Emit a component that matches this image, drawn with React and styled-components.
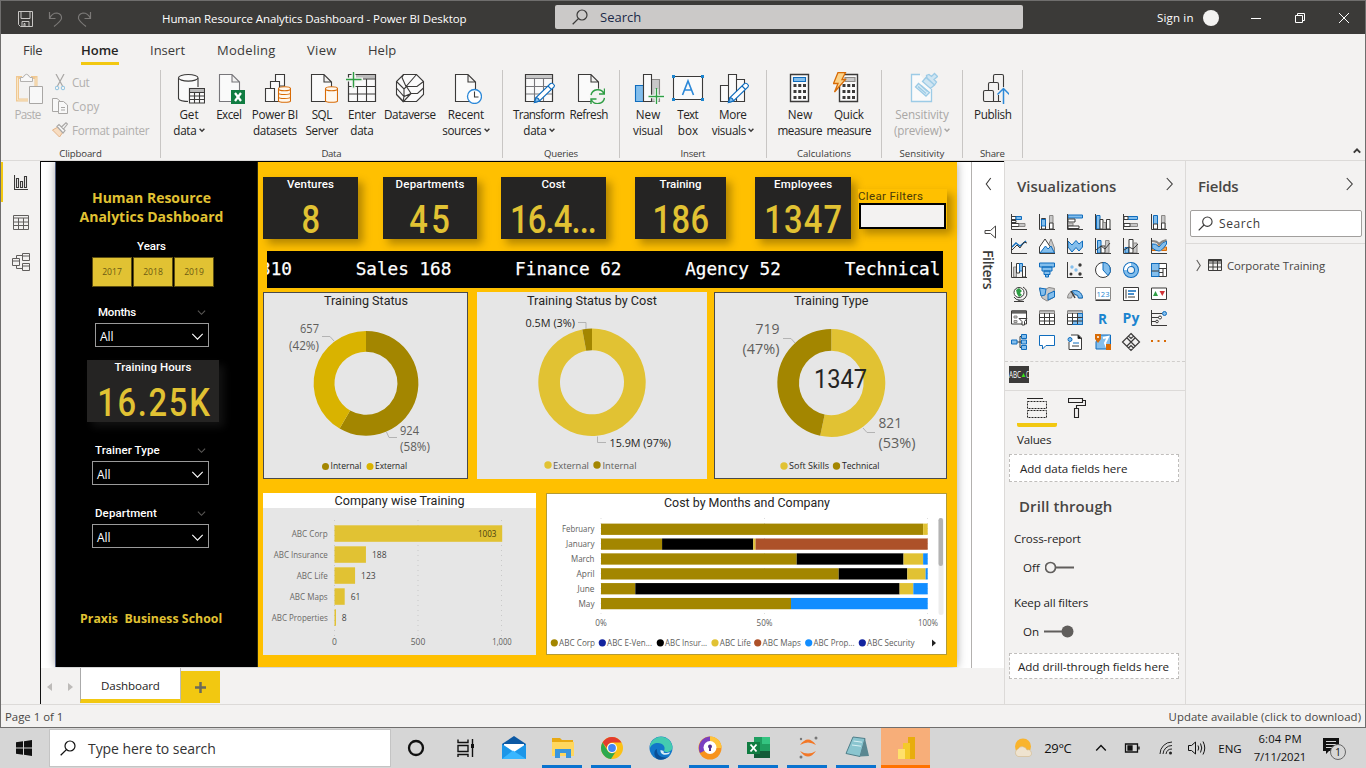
import React, { useLayoutEffect, useRef, useState } from "react";
import styled, { createGlobalStyle, css } from "styled-components";

const UI = `"Open Sans", "Noto Sans", sans-serif`;
const DIN = `Roboto, "Liberation Sans", sans-serif`;
const C = {
  ink: "#252423", dark: "#3b3a39", pane: "#f3f2f1", line: "#dcdad8", yellow: "#f2c811",
  amber: "#ffc000", gold: "#e1c233", olive: "#a38600", mustard: "#d9b300", card: "#252423",
  blue: "#118dff", sky: "#83beec", stroke: "#0f6cbd", grey: "#c8c6c4", rust: "#ad5129",
};

const Global = createGlobalStyle`
  * { box-sizing: border-box; }
  body { margin: 0; overflow: hidden; background: #d5d5d5; font-family: ${UI}; font-size: 12px; color: ${C.ink}; }
  svg { display: block; flex: none; }
`;

/* ---------- text that keeps a set advance width ---------- */
const FitSpan = styled.span`
  display: inline-block;
  white-space: pre;
`;
function Fit({ w, children }) {
  const ref = useRef(null);
  const [ls, setLs] = useState(0);
  useLayoutEffect(() => {
    const n = String(children).length;
    const natural = ref.current.offsetWidth;
    setLs((w - natural) / Math.max(1, n - 1));
  }, [w, children]);
  return <FitSpan ref={ref} style={{ letterSpacing: ls, marginRight: -ls }}>{children}</FitSpan>;
}

/* ---------- shell ---------- */
const Screen = styled.div`
  width: 1366px; height: 768px; display: flex; flex-direction: column; overflow: hidden;
`;
const Window = styled.div`
  height: 728px; display: flex; flex-direction: column; background: ${C.pane};
  border: 1px solid #6f6e6d;
`;
const TitleBar = styled.div`
  height: 33px; flex: none; background: #3b3a38; color: #fff; display: flex; align-items: center;
`;
const QuickTools = styled.div`
  width: 161px; display: flex; align-items: center; padding: 3px 0 0 16px; gap: 14px;
`;
const WindowTitle = styled.div`width: 393px; font-size: 11.5px; padding-top: 1px;`;
const TopSearch = styled.div`
  width: 468px; height: 24px; background: #cbc9c8; border-radius: 2px; color: #1b2a49;
  display: flex; align-items: center; padding-left: 17px; gap: 12px; font-size: 13px; margin-bottom: 1px;
`;
const SignIn = styled.div`
  display: flex; align-items: center; gap: 10px; font-size: 11.5px; margin-left: 134px; width: 94px;
`;
const Avatar = styled.div`width: 16px; height: 16px; border-radius: 50%; background: #f3f2f1;`;
const WindowButtons = styled.div`display: flex; gap: 34px; align-items: center;`;

const Tabs = styled.div`height: 32px; flex: none; display: flex; padding-left: 22px;`;
const Tab = styled.div`
  width: ${p => p.$w}px; margin-right: ${p => p.$gap}px; height: 31px; line-height: 33px; font-size: 13px;
  color: #3b3a39; border-bottom: 3px solid ${p => (p.$on ? C.yellow : "transparent")};
  ${p => p.$on && css`font-weight: 600; color: ${C.ink};`}
`;

const Ribbon = styled.div`
  height: 94px; flex: none; display: flex; position: relative; padding-top: 4px;
`;
const Group = styled.div`
  height: 88px; width: ${p => p.$w}px; border-right: 1px solid #c8c6c4; display: flex; flex-direction: column;
  justify-content: space-between;
`;
const GroupRow = styled.div`display: flex; padding: 2px 0 0 8px;`;
const GroupName = styled.div`font-size: 9.6px; line-height: 9px; text-align: center; color: #3b3a39;`;
const Tool = styled.div`
  width: ${p => p.$w}px; display: flex; flex-direction: column; align-items: center; font-size: 11.7px;
  line-height: 16px; white-space: nowrap; color: ${p => (p.$off ? "#a9a7a5" : C.ink)};
  svg.big { margin-bottom: 2px; }
`;
const ToolLine = styled.div`display: flex; align-items: center; gap: 2px; height: 16px;`;
const ClipBody = styled.div`display: flex; color: #b1afad;`;
const PasteTool = styled.div`
  width: 54px; display: flex; flex-direction: column; align-items: center; padding-top: 2px; font-size: 11.7px; line-height: 16px;
  svg { margin-bottom: 2px; }
`;
const ClipList = styled.div`display: flex; flex-direction: column; font-size: 11.7px;`;
const ClipItem = styled.div`display: flex; align-items: center; height: 24px; gap: ${p => p.$gap}px; margin-left: ${p => p.$ml}px;`;
const Collapse = styled.div`position: absolute; right: 4px; bottom: 5px;`;

/* ---------- middle ---------- */
const Main = styled.div`height: 544px; flex: none; display: flex; border-top: 1px solid ${C.line};`;
const Rail = styled.div`width: 40px; display: flex; flex-direction: column; border-right: 1px solid #111; padding-top: 1px;`;
const RailItem = styled.div`
  height: 40px; display: flex; align-items: center; justify-content: center;
  border-left: 2px solid ${p => (p.$on ? C.yellow : "transparent")}; padding-right: 1px;
`;
const Center = styled.div`width: 963px; display: flex; flex-direction: column;`;
const CanvasRow = styled.div`height: 507px; display: flex; background: #fff; overflow: hidden; border-top: 1px solid #000;`;
const Report = styled.div`
  margin-left: 14px; width: 902px; height: 505px; display: flex; box-shadow: 0 0 9px rgba(0,0,0,.35);
`;
const FilterPane = styled.div`
  width: 33px; margin-left: 14px; border-left: 1px solid #b3b1af; display: flex; flex-direction: column; align-items: center;
  padding-top: 16px; background: #fff; position: relative;
`;
const FilterMark = styled.svg`margin-top: 35px; margin-left: 4px;`;
const FilterName = styled.div`
  writing-mode: vertical-rl; font-size: 14px; line-height: 18px; font-weight: 600; color: #3b3a39; margin-top: 11px; letter-spacing: -.35px;
`;

/* ---------- report left column ---------- */
const Side = styled.div`width: 202px; background: #000; display: flex; flex-direction: column; border-left: 1px solid #4c5878;`;
const SideTitle = styled.div`
  margin-top: 26px; width: 191px; text-align: center; color: ${C.gold}; font-size: 14px; line-height: 19px; font-weight: 700;
`;
const YearsName = styled.div`
  width: 191px; text-align: center; color: #fff; font: 500 11.5px/14px ${DIN}; margin-top: 13px; 
`;
const Years = styled.div`display: flex; gap: 1px; margin: 4px 0 0 36px;`;
const Year = styled.div`
  width: 40px; height: 30px; background: ${C.gold}; border: 1px solid #5b4d10; color: #6b5a12; font-size: 8.6px;
  display: flex; align-items: center; justify-content: center;
`;
const Slicer = styled.div`
  margin: ${p => p.$mt}px 0 0 ${p => p.$ml}px; width: ${p => p.$w}px; display: flex; flex-direction: column; color: #fff;
`;
const SlicerHead = styled.div`
  display: flex; justify-content: space-between; align-items: center; padding: 0 3px 0 3px; height: 14px; font: 500 11.5px/14px ${DIN};
`;
const SlicerBox = styled.div`
  margin-top: 4px; height: 24px; border: 1px solid #9a9a9a; display: flex; align-items: center; justify-content: space-between;
  padding: 2px 4px 0 4px; font-size: 12px;
`;
const Hours = styled.div`
  margin: 13px 0 0 31px; width: 132px; height: 62px; background: ${C.card}; display: flex; flex-direction: column; align-items: center;
  box-shadow: 5px 5px 8px rgba(60,60,60,.3);
`;
const Praxis = styled.div`margin: 62px 0 0 24px; color: ${C.gold}; font-size: 12.3px; font-weight: 700; line-height: 18px;`;

/* ---------- report body ---------- */
const Body = styled.div`width: 700px; background: ${C.amber}; padding: 15px 0 0 5px; border-left: 1px solid #2a2a10;`;
const Kpis = styled.div`display: flex; align-items: flex-start;`;
const Kpi = styled.div`
  width: ${p => p.$w}px; margin-right: ${p => p.$gap}px; height: 62px; background: ${C.card}; display: flex; flex-direction: column;
  align-items: center; box-shadow: 5px 5px 8px rgba(70,50,0,.4);
`;
const KpiName = styled.div`color: #fff; font: 500 11.5px/14px ${DIN};`;
const KpiValue = styled.div`
  color: ${C.gold}; font: 500 38px/48px ${DIN}; padding-top: 5px; height: 48px; transform: scaleX(.86);
`;
const Clear = styled.div`
  margin-top: 12px; width: 89px; height: 40px; box-shadow: 5px 5px 8px rgba(70,50,0,.4); background: ${C.amber}; 
  font: 400 11.5px/14px ${DIN}; color: #4a3a08;
`;
const ClearBox = styled.div`width: 87px; height: 26px; margin-left: 1px; border: 2px solid #000; background: #f3f2f1;`;
const Ticker = styled.div`
  margin: 12px 0 0 4px; width: 676px; height: 37px; background: #000; color: #fff; overflow: hidden; white-space: pre; 
  font: 400 17.66px/36px "DejaVu Sans Mono", monospace; display: flex;
`;
const TickerRun = styled.span`margin-left: -7px; -webkit-text-stroke: .25px #fff;`;
const ChartRow = styled.div`display: flex; margin-top: ${p => p.$mt}px;`;
const Tile = styled.div`
  width: ${p => p.$w}px; height: ${p => p.$h}px; margin-right: ${p => p.$gap || 0}px; background: ${p => p.$bg};
  box-shadow: ${p => (p.$line ? `inset 0 0 0 1px ${p.$line}` : "none")};
`;

/* ---------- page tabs / status ---------- */
const PageTabs = styled.div`height: 36px; display: flex; align-items: flex-start; background: ${C.pane};`;
const PageNav = styled.div`width: 39px; height: 37px; display: flex; align-items: center; justify-content: space-between; padding: 0 6px 0 6px;`;
const PageTab = styled.div`
  width: 101px; height: 35px; background: #fff; border-bottom: 4px solid ${C.yellow}; border-left: 1px solid #aaa; border-right: 1px solid #bbb;
  display: flex; align-items: center; justify-content: center; font-size: 11.6px; padding-top: 4px;
`;
const AddPage = styled.div`width: 39px; height: 32px; margin-top: 3px; background: ${C.yellow}; display: flex; align-items: center; justify-content: center;`;
const Status = styled.div`
  flex: 1; border-top: 1px solid ${C.line}; display: flex; justify-content: space-between; align-items: center;
  padding: 1px 4px 0 4px; font-size: 11.4px; color: #484644;
`;

/* ---------- right panes ---------- */
const VizPane = styled.div`width: 181px; border-left: 1px solid ${C.line}; display: flex; flex-direction: column;`;
const FieldsPane = styled.div`flex: 1; border-left: 1px solid ${C.line}; display: flex; flex-direction: column;`;
const PaneHead = styled.div`
  height: 46px; display: flex; align-items: center; justify-content: space-between; padding: 3px 10px 0 12px; font-size: 15px; 
  font-weight: 600; color: #484644; flex: none;
  svg { margin-bottom: 4px; }
`;
const IconGrid = styled.div`
  display: grid; grid-template-columns: repeat(6, 28px); grid-auto-rows: 24px; padding: 3px 0 6px 0; height: 155px;
  border-bottom: 1px dashed #d0cecc; justify-items: center; align-items: center; 
`;
const Custom = styled.div`height: 29px; border-bottom: 1px solid ${C.line}; padding: 4px 0 0 4px;`;
const FormatTabs = styled.div`display: flex; padding: 7px 0 0 12px; height: 38px;`;
const FormatTab = styled.div`
  width: 40px; height: 29px; display: flex; justify-content: center; border-bottom: 4px solid ${p => (p.$on ? C.yellow : "transparent")};
  border-radius: 2px;
`;
const WellName = styled.div`font-size: 11.6px; line-height: 16px; padding-left: ${p => p.$pl}px; margin-top: ${p => p.$mt}px;`;
const Well = styled.div`
  margin: ${p => p.$mt}px 0 0 4px; width: 170px; height: ${p => p.$h}px; background: #fff; border: 1px dashed #c0bebc; 
  padding-left: ${p => p.$pl}px; display: flex; align-items: center; font-size: 11.6px;
`;
const Drill = styled.div`font-size: 15px; font-weight: 600; color: #484644; line-height: 22px; padding-left: 14px; margin-top: 13px;`;
const Toggle = styled.div`display: flex; align-items: center; padding-left: 18px; gap: 5px; height: 16px; margin-top: ${p => p.$mt}px; font-size: 11.6px;`;
const FieldSearch = styled.div`
  margin: 3px 3px 0 4px; height: 27px; border: 1px solid #a19f9d; border-radius: 2px; background: #fff; display: flex; align-items: center;
  padding-left: 7px; gap: 6px; font-size: 12px; color: #3b3a39;
`;
const FieldTree = styled.div`margin-top: 6px; border-top: 1px solid ${C.line}; padding: 12px 0 0 9px;`;
const FieldItem = styled.div`display: flex; align-items: center; height: 18px; font-size: 11.4px; color: #484644;
  svg:nth-child(2) { margin: 0 5px 0 6px; }
`;

/* ---------- taskbar ---------- */
const Taskbar = styled.div`height: 40px; flex: none; background: #d6d6d6; display: flex; color: #111;`;
const StartCell = styled.div`width: 49px; display: flex; align-items: center; justify-content: center; padding-right: 1px;`;
const TaskSearch = styled.div`
  width: 342px; height: 38px; margin-top: 1px; background: #fff; border: 1px solid #c4c4c4; display: flex; align-items: center; padding-left: 10px; gap: 12px; font-size: 14px; color: #333;
`;
const TaskCell = styled.div`
  width: 49px; height: 40px; display: flex; align-items: center; justify-content: center; position: relative;
  background: ${p => (p.$active ? "#f7ae79" : "transparent")};
  &::after { content: ""; position: absolute; left: ${p => (p.$active ? 0 : 4)}px; right: ${p => (p.$active ? 0 : 5)}px; bottom: 0; height: 3px;
    background: ${p => (p.$active ? "#ff7200" : p.$open ? "#0a73cf" : "transparent")}; }
`;
const Tray = styled.div`flex: 1; display: flex; align-items: center; padding-left: 81px;`;
const TrayItem = styled.div`
  width: ${p => p.$w}px; margin-left: ${p => p.$ml || 0}px; display: flex; align-items: center; justify-content: center; font-size: ${p => p.$fs || 12}px;
`;
const Clock = styled.div`width: 66px; font-size: 11.3px; line-height: 18px; text-align: center;`;

/* ---------- small glyphs ---------- */
const Chev = ({ d = "down", s = 8, c = C.dark, t = 1.1, w, h }) => {
  const path = { down: "M1 3 5 7 9 3", up: "M1 7 5 3 9 7", left: "M7.5 0 2.5 5 7.5 10", right: "M2.5 0 7.5 5 2.5 10" }[d];
  return <svg width={w || s} height={h || s} viewBox="0 0 10 10" preserveAspectRatio="none" overflow="visible"><path d={path} fill="none" stroke={c} strokeWidth={t} vectorEffect="non-scaling-stroke" /></svg>;
};
const Mag = ({ s = 16, c = C.dark }) => (
  <svg width={s} height={s} viewBox="0 0 16 16"><circle cx="10" cy="6" r="5" fill="none" stroke={c} strokeWidth="1.2" /><path d="M6.4 9.6 .7 15.3" stroke={c} strokeWidth="1.3" /></svg>
);

/* ---------- ribbon icons, 32 x 32 ---------- */
const K = C.dark;
const Big = ({ children, w = 32 }) => <svg className="big" width={w} height="32" viewBox={`0 0 ${w} 32`} fill="#fafafa" stroke={K} strokeWidth="1.1">{children}</svg>;
const Doc = ({ x = 5.5, c = K }) => <path stroke={c} d={`M${x} 2.5H${x + 12.5}L${x + 20} 10V29.5H${x}ZM${x + 12.5} 2.5V10H${x + 20}`} />;
const Cyl = () => (
  <g stroke="#d86b06" fill="#fff8ee"><path d="M19.5 17V29C19.5 30.7 31.5 30.7 31.5 29V17" /><ellipse cx="25.5" cy="16.7" rx="6" ry="2" /></g>
);
const Pencil = () => (
  <g><path d="M11.5 30.500 13 25.500 27.500 11.500Q30 10.500 31.500 13.500L31 15 16.500 29Z" fill="#fff" stroke={C.stroke} /><path d="M11.500 30.500 13 25.500Q16 26 16.500 29Z" fill={C.sky} stroke={C.stroke} /><path d="M25 14 28.500 17.500" stroke={C.stroke} /></g>
);
const I = {
  get: <Big><path d="M5.500 6V26.500C6 28.500 10 29.500 17 29.500H25V6" /><ellipse cx="15.250" cy="5.800" rx="9.750" ry="3.300" /><path d="M15 15H32V32H15Z" fill="#f3f2f1" stroke="none" /><path d="M17 17H31V31H17Z" stroke="none" /><path d="M17 17H31V20H17Z" fill="#bbb" stroke="none" /><path d="M16.500 16.500H31.500V31H16.500ZM16.500 20.500H31.500M16.500 24H31.500M16.500 27.500H31.500M21.500 20V31M26.500 20V31" fill="none" /></Big>,
  excel: <Big><Doc x={6.5} c="#77767a" /><path d="M18 18H32V32H18Z" fill="#107c41" stroke="none" /><path d="M22 21 28 29M28 21 22 29" stroke="#fff" strokeWidth="2.200" /></Big>,
  pbi: <Big><path d="M16.500 9V2.500H25.500V14H16.500" /><path d="M11.500 16V9.500H20.500V29.500H15.500" /><path d="M6.500 16.500H15.500V29.500H6.500Z" /><Cyl /><path d="M19.500 21C19.500 23 31.500 23 31.500 21M19.500 25C19.500 27 31.500 27 31.500 25" stroke="#d86b06" fill="none" /></Big>,
  sql: <Big><Doc x={5.500} /><Cyl /></Big>,
  enter: <Big><path d="M2.500 2.500H29.500V29.500H2.500Z" /><path d="M10 3H29V6.500H10Z" fill="#bbb" stroke="none" /><path d="M2.500 2.500H29.500V29.500H2.500ZM2.500 14.500H29.500M2.500 22H29.500M11.500 14V29M20.500 7V29M10 7H29" fill="none" /><path d="M7.500 0V17M0 7.500H17" stroke="#f3f2f1" strokeWidth="4" /><path d="M7.500 0V15.500M0 7.500H15.500" stroke="#2f9e44" strokeWidth="1.400" /></Big>,
  dv: <Big><path d="M9.500 2.500H22.500L29.500 9.500V22.500L22.500 29.500H9.500L2.500 22.500V9.500Z" /><path d="M9.500 2.500 8 5.500 12 14.500 22.500 2.500M2.500 9.500 10 17 12.500 14.500H23L29.500 9.500M2.500 16 10 24.500 17 21.500 12.500 14.500M17 21.500H23.500L29.500 16M2.500 22.500 9 29.500 10 24.500M10 17V24.500M17 21.500 10 29" fill="none" /></Big>,
  recent: <Big><Doc x={5.500} /><circle cx="24.500" cy="24.500" r="7" stroke="#2b88d8" fill="#fff" strokeWidth="1.300" /><path d="M24.500 19.500V25H28.500" fill="none" /></Big>,
  transform: <Big><path d="M2.500 2.500H29.500V29.500H2.500Z" /><path d="M3 3H29V6H3Z" fill="#c8c8c8" stroke="none" /><path d="M2.500 6.500H29.500M2.500 14.500H29.500M2.500 22H29.500M11.500 7V29M20.500 7V29" stroke="#77767a" /><path d="M2.500 2.500H29.500V29.500H2.500Z" fill="none" /><Pencil /></Big>,
  refresh: <Big><Doc x={5.500} /><circle cx="24.500" cy="24.500" r="8" fill="#f3f2f1" stroke="none" /><path d="M18 23A7 7 0 0 1 31 21.500M31.500 16.500V22H26M31.500 26A7 7 0 0 1 18.500 28M18 32V27H23.500" fill="none" stroke="#2f9e44" strokeWidth="1.400" /></Big>,
  visual: <Big><path d="M19.500 7.500H27.500V29.500H19.500Z" fill="#c8c8c8" stroke="#8a8886" /><path d="M3.500 13.500H11.500V29.500H3.500Z" fill={C.sky} stroke={C.stroke} /><path d="M11.500 2.500H19.500V29.500H11.500Z" /><path d="M24.500 17V32M17 24.500H32" stroke="#fff" strokeWidth="3.500" /><path d="M24.500 16V32M16.500 24.500H32" stroke="#2f9e44" strokeWidth="1.400" /></Big>,
  text: <Big><path d="M1.500 4.500H30.500V27.500H1.500Z" /><path d="M10.500 23 16 9 21.500 23M12.300 18H19.700" fill="none" stroke="#2b88d8" strokeWidth="1.600" /><path d="M0 3H3V6H0ZM29 3H32V6H29ZM0 26H3V29H0ZM29 26H32V29H29Z" fill="#1b84cf" stroke="none" /></Big>,
  more: <Big><path d="M3.500 13.500H11.500V29.500H3.500ZM11.500 2.500H19.500V29.500H11.500ZM19.500 7.500H27.500V29.500H19.500Z" /><Pencil /></Big>,
  calc: <Big><path d="M6.500 2.500H24.500V29.500H6.500Z" strokeWidth="1.400" /><path d="M9.500 5.500H21.500V9.500H9.500Z" fill={C.sky} stroke={C.stroke} /><path d="M9.500 13.500H22M9.500 19.500H22M9.500 25.500H22" strokeWidth="3" strokeDasharray="3 1.750" /></Big>,
  quick: <Big><path d="M6.500 2.500H24.500V29.500H6.500Z" strokeWidth="1.400" /><path d="M12 5.500H22V9.500H12Z" fill="#c8c8c8" stroke="#8a8886" /><path d="M9.500 13.500H22M9.500 19.500H22M9.500 25.500H22" strokeWidth="3" strokeDasharray="3 1.750" /><path d="M5 .5H12.500L9 7.500H12.500L1.500 20 5 11.500H.5Z" fill="#fbd38a" stroke="#d86b06" strokeWidth="1.300" /></Big>,
  sens: <Big><g stroke="#9ccbe6" strokeWidth="1.300"><path d="M14 2.500H5.500V29.500H25.500V17" /><path d="M9.500 15 12.500 11.500 23.500 20.500 20 24Z" fill="#d8ebf5" /><path d="M12 14.500 20 21.500M15 13.500 21.500 19.500" fill="none" /><path d="M16.500 9.500 20 5.500 28.500 13 24.500 16.500ZM21 6 20.500 3.500 23 2.500 25.500 4.500 28.500 1.500 31.500 4.500 28 7.500 30.500 10 28.500 13Z" fill="#cfe5f2" /></g></Big>,
  publish: <Big><path d="M16.500 10V4Q16.500 2.500 18 2.500H25Q26.500 2.500 26.500 4V15M11.500 18V12Q11.500 10.500 13 10.500H20Q21.500 10.500 21.500 12V18M6.500 20Q6.500 18.500 8 18.500H15Q16.500 18.500 16.500 20V29.500H8Q6.500 29.500 6.500 28ZM16.500 29.500H24M21.500 23V29" fill="none" /><path d="M26.500 32V17M20.500 22.500 26.500 16.500 32.500 22.500" stroke="#2b88d8" fill="none" strokeWidth="1.500" /></Big>,
};

const ribbon = [
  { name: "Data", w: 342, nw: 20, tools: [["get", 40, "Get", 19, "data", 23, 1], ["excel", 40, "Excel", 26], ["pbi", 52, "Power BI", 46, "datasets", 44], ["sql", 42, "SQL", 21, "Server", 33], ["enter", 38, "Enter", 28, "data", 23], ["dv", 58, "Dataverse", 52], ["recent", 54, "Recent", 36, "sources", 39, 1]] },
  { name: "Queries", w: 117, nw: 34, tools: [["transform", 56, "Transform", 52, "data", 23, 1], ["refresh", 44, "Refresh", 39]] },
  { name: "Insert", w: 147, nw: 25, tools: [["visual", 40, "New", 24, "visual", 30], ["text", 40, "Text", 21, "box", 20], ["more", 50, "More", 28, "visuals", 35, 1]] },
  { name: "Calculations", w: 115, nw: 54, tools: [["calc", 50, "New", 24, "measure", 45], ["quick", 48, "Quick", 30, "measure", 45]] },
  { name: "Sensitivity", w: 81, nw: 45, tools: [["sens", 64, "Sensitivity", 54, "(preview)", 48, 1]] },
  { name: "Share", w: 60, nw: 25, tools: [["publish", 44, "Publish", 38]] },
];

function RibbonBar() {
  return (
    <Ribbon>
      <Group $w={160}>
        <ClipBody>
          <PasteTool>
            <svg width="32" height="32" viewBox="0 0 32 32" fill="none"><path d="M10 5.500H5.500V28H16M24 14V5.500H19" stroke="#f0c891" strokeWidth="3" /><path d="M5.500 5.500V28H16M24 14V5.500" stroke="#f8e6c8" /><path d="M8.500 9.500V5.500H11Q14.500 -1 18 5.500H20.500V9.500Z" fill="#f8f8f8" stroke="#b3b1af" /><path d="M17.500 14.500H30.500V31.500H17.500Z" fill="#f8f8f8" stroke="#a9a7a5" /></svg>
            <Fit w={27}>Paste</Fit>
          </PasteTool>
          <ClipList>
            <ClipItem $gap={7} $ml={0}><svg width="10" height="17" viewBox="0 0 10 17" fill="none"><path d="M1 0 7.500 12M9 0 2.500 12" stroke="#a9a7a5" strokeWidth="1.200" /><circle cx="2" cy="14" r="1.800" stroke="#8fc3e0" /><circle cx="8" cy="14" r="1.800" stroke="#8fc3e0" /></svg><Fit w={18}>Cut</Fit></ClipItem>
            <ClipItem $gap={4} $ml={-3}><svg width="16" height="16" viewBox="0 0 16 16" fill="#f8f8f8" stroke="#a9a7a5"><path d="M6 13.500H.5V.5H5L8 3M6.500 3.500H11.500L15.500 7V15.500H6.500ZM9 9.500H13M9 12H13" /></svg><Fit w={27}>Copy</Fit></ClipItem>
            <ClipItem $gap={4} $ml={-3}><svg width="16" height="16" viewBox="0 0 16 16" fill="none"><path d="M.5 8 6 5 11 10 7.500 15Z" fill="#f7dcc0" stroke="#e2b287" /><path d="M5 4.500 7 2.500 13 8.500 11 11ZM9.500 5 14 .8 15.500 2 11.500 7" fill="#f8f8f8" stroke="#a9a7a5" strokeWidth="1.200" /></svg><Fit w={78}>Format painter</Fit></ClipItem>
          </ClipList>
        </ClipBody>
        <GroupName><Fit w={43}>Clipboard</Fit></GroupName>
      </Group>
      {ribbon.map(g => (
        <Group key={g.name} $w={g.w}>
          <GroupRow>
            {g.tools.map(([id, w, a, aw, b, bw, menu]) => (
              <Tool key={id} $w={w} $off={id === "sens"}>
                {I[id]}
                <ToolLine><Fit w={aw}>{a}</Fit></ToolLine>
                {b && <ToolLine><Fit w={bw}>{b}</Fit>{menu && <Chev s={6} t={1.5} c={id === "sens" ? "#a9a7a5" : K} />}</ToolLine>}
              </Tool>
            ))}
          </GroupRow>
          <GroupName><Fit w={g.nw}>{g.name}</Fit></GroupName>
        </Group>
      ))}
      <Collapse><Chev d="up" s={8} t={2} /></Collapse>
    </Ribbon>
  );
}

/* ---------- charts ---------- */
const T = ({ x, y, s = 9, w, c = "#605e5c", a = "start", f = UI, b, children }) => (
  <text x={x} y={y} fontSize={s} fill={c} textAnchor={a} fontFamily={f} fontWeight={b || 400} textLength={w} lengthAdjust="spacingAndGlyphs">{children}</text>
);
const arc = (cx, cy, R, r, a0, a1) => {
  const p = (q, a) => `${(cx + q * Math.sin(a * 2 * Math.PI)).toFixed(2)} ${(cy - q * Math.cos(a * 2 * Math.PI)).toFixed(2)}`;
  const big = a1 - a0 > 0.5 ? 1 : 0;
  return `M${p(R, a0)}A${R} ${R} 0 ${big} 1 ${p(R, a1)}L${p(r, a1)}A${r} ${r} 0 ${big} 0 ${p(r, a0)}Z`;
};
const Donut = ({ cx, cy, R, r, split, c1, c2 }) => (
  <g><path d={arc(cx, cy, R, r, 0, split)} fill={c1} /><path d={arc(cx, cy, R, r, split, 1)} fill={c2} /></g>
);
const Lead = ({ d }) => <path d={d} fill="none" stroke="#b3b3b3" />;

const StatusChart = () => (
  <svg width="205" height="187">
    <T x={61} y={13} s={12} w={84} c={C.ink} f={DIN}>Training Status</T>
    <Donut cx={103} cy={91.3} R={52.4} r={31.5} split={0.584} c1={C.olive} c2={C.mustard} />
    <T x={56} y={40.800} s={12} w={19} a="end">657</T><T x={56} y={58} s={12} w={30} a="end">(42%)</T>
    <Lead d="M59 44.500H67L71 49" />
    <T x={137} y={143} s={12} w={19}>924</T><T x={137} y={159} s={12} w={30}>(58%)</T>
    <Lead d="M123.500 140 126 145.500H134" />
    <circle cx="62.500" cy="174.500" r="3.500" fill={C.olive} /><T x={67.500} y={177.300} w={31} c={C.ink}>Internal</T>
    <circle cx="107" cy="174.500" r="3.500" fill={C.mustard} /><T x={112} y={177.300} w={32} c={C.ink}>External</T>
  </svg>
);
const CostChart = () => (
  <svg width="230" height="187">
    <T x={50} y={12.500} s={12} w={130} c={C.ink} f={DIN}>Training Status by Cost</T>
    <Donut cx={115} cy={90.300} R={53.700} r={32} split={0.971} c1={C.gold} c2={C.olive} />
    <T x={48.500} y={34.500} s={10} w={49.500} c={C.ink}>0.5M (3%)</T><Lead d="M101 30.500H109V37" />
    <T x={132.500} y={155} s={10} w={61.500} c={C.ink}>15.9M (97%)</T><Lead d="M120.500 144.500V150.500H129" />
    <circle cx="71" cy="173" r="3.700" fill={C.gold} /><T x={76} y={177.300} w={36}>External</T>
    <circle cx="120" cy="173" r="3.700" fill={C.olive} /><T x={125.500} y={177.300} w={34}>Internal</T>
  </svg>
);
const TypeChart = () => (
  <svg width="233" height="187">
    <T x={80} y={13} s={12} w={74.500} c={C.ink} f={DIN}>Training Type</T>
    <Donut cx={117.300} cy={91} R={54} r={32.300} split={0.533} c1={C.gold} c2={C.olive} />
    <T x={65.500} y={42} s={14} w={24} a="end">719</T><T x={65.500} y={61.500} s={14} w={37} a="end">(47%)</T>
    <Lead d="M69 46.500H77L81 51" />
    <T x={164.500} y={136} s={14} w={23.500}>821</T><T x={164.500} y={156} s={14} w={37}>(53%)</T>
    <Lead d="M149 136 153 140.500H161" />
    <T x={100} y={96} s={25} w={53} c={C.ink} f={DIN}>1347</T>
    <circle cx="70" cy="174" r="3.700" fill={C.gold} /><T x={75} y={177.300} w={40} c={C.ink}>Soft Skills</T>
    <circle cx="122.500" cy="174" r="3.700" fill={C.olive} /><T x={128} y={177.300} w={37.500} c={C.ink}>Technical</T>
  </svg>
);
const companies = [["ABC Corp", 1003, 36], ["ABC Insurance", 188, 54], ["ABC Life", 123, 31], ["ABC Maps", 61, 38], ["ABC Properties", 8, 56]];
const CompanyChart = () => (
  <svg width="273" height="162">
    <rect width="273" height="15" fill="#fff" />
    <T x={71.500} y={12.300} s={12.300} w={130} c={C.ink} f={DIN}>Company wise Training</T>
    {[71.500, 155, 238.500].map(x => <path key={x} d={`M${x} 27V143`} stroke="#c8c8c8" strokeDasharray="1 4" />)}
    {companies.map(([n, v, w], i) => (
      <g key={n}>
        <rect x="71.500" y={32.300 + 21 * i} width={Math.max(1.500, v * 0.1672)} height="16.500" fill={C.gold} />
        <T x={64.700} y={43.500 + 21 * i} s={8.500} w={w} a="end" c="#6b6967">{n}</T>
        {i === 0 ? <T x={233.500} y={44.300} s={8.500} w={18.500} a="end" c="#4a4010">1003</T>
          : <T x={77.500 + v * 0.1672} y={44.300 + 21 * i} s={8.500} c="#444">{v}</T>}
      </g>
    ))}
    <T x={71.500} y={152} s={8.500} a="middle">0</T><T x={155} y={152} s={8.500} a="middle">500</T><T x={239} y={152} s={8.500} w={19.500} a="middle">1,000</T>
  </svg>
);
const palette = [C.olive, "#000", C.gold, C.rust, C.blue];
const months = [
  ["February", 32.500, [0.986, 0, 0.014, 0, 0]], ["January", 28.500, [0.187, 0.279, 0.007, 0.527, 0]],
  ["March", 23.500, [0.599, 0.327, 0.06, 0, 0.014]], ["April", 18, [0.7276, 0.21, 0.056, 0, 0.0064]],
  ["June", 17, [0.105, 0.809, 0.042, 0, 0.044]], ["May", 16, [0.5816, 0, 0, 0, 0.4184]],
];
const legend = [["ABC Corp", 8.300, 36, C.olive], ["ABC E-Ven...", 56.300, 45, "#12239e"], ["ABC Insur...", 114.300, 42, "#000"], ["ABC Life", 169, 31, C.gold], ["ABC Maps", 211.700, 38.500, C.rust], ["ABC Prop...", 262.700, 41, C.blue], ["ABC Security", 316.300, 47.500, "#12239e"]];
const MonthChart = () => (
  <svg width="401" height="162">
    <T x={118} y={13.500} s={12.300} w={166} c={C.ink} f={DIN}>Cost by Months and Company</T>
    {[55, 218.500, 381.500].map(x => <path key={x} d={`M${x} 25V122`} stroke="#ddd" strokeDasharray="1 4" />)}
    {months.map(([n, w, parts], i) => {
      let x = 55;
      return (
        <g key={n}>
          <T x={48.500} y={39.300 + 14.870 * i} s={8.500} w={w} a="end">{n}</T>
          {parts.map((p, k) => { const r = <rect key={k} x={x} y={30.600 + 14.870 * i} width={p * 326.700} height="11.300" fill={palette[k]} />; x += p * 326.700; return r; })}
        </g>
      );
    })}
    <T x={55} y={133.300} s={8.500} w={11.500} a="middle">0%</T><T x={218.500} y={133.300} s={8.500} w={16} a="middle">50%</T><T x={382} y={133.300} s={8.500} w={20} a="middle">100%</T>
    {legend.map(([n, x, w, c]) => <g key={n}><circle cx={x} cy="149.800" r="3.600" fill={c} /><T x={x + 4.800} y={153} s={8.500} w={w}>{n}</T></g>)}
    <path d="M386 146.500V153.500L390 150Z" fill="#222" />
    <rect x="392.500" y="25" width="5" height="97" rx="2.500" fill="#ededed" /><rect x="392.500" y="25" width="4.500" height="48" rx="2.200" fill="#b3b3b3" />
  </svg>
);

/* ---------- visualization gallery, 16 x 16 ---------- */
const B = { fill: C.sky, stroke: C.stroke }, G = { fill: "#c8c8c8", stroke: "#8a8886" }, W = { fill: "#fff", stroke: K };
const gallery = [
  <g><path d="M1 2.500H5V5.500H1" {...W} /><path d="M5 2.500H10.500V5.500H5Z" {...B} /><path d="M1 6.500H5V8.500H1" {...W} /><path d="M1 9.500H8V12.500H1" {...W} /><path d="M8 9.500H14V12.500H8Z" {...G} /><path d="M.5 0V15.500H16" fill="none" /></g>,
  <g><path d="M2.500 9V15H6.500V4.500H2.500Z" {...W} /><path d="M2.500 5.500H6.500V12H2.500Z" {...B} /><path d="M10.500 1.500H14V15H10.500Z" {...G} /><path d="M10.500 9H14V15H10.500Z" {...W} /><path d="M.5 0V15.500H16" fill="none" /></g>,
  <g><path d="M1 1H15.500V4H1Z" {...B} /><path d="M1 5H8V8H1Z" {...W} /><path d="M1 9H6V12H1Z" {...G} /><path d="M1 12H12V14.500H1Z" {...W} /><path d="M.5 0V15.500H16" fill="none" /></g>,
  <g><path d="M1.500 1.500H5V15H1.500Z" {...B} /><path d="M5 5.500H8V15H5Z" {...W} /><path d="M8 8.500H11V15H8Z" {...G} /><path d="M11.500 5.500H15V15H11.500Z" {...W} /><path d="M.5 0V15.500H16" fill="none" /></g>,
  <g><path d="M1 2.500H14.500V5.500H1Z" {...B} /><path d="M1 2.500H5V5.500H1Z" {...W} /><path d="M1 9.500H14.500V12.500H1Z" {...G} /><path d="M1 9.500H7V12.500H1Z" {...W} /><path d="M.5 0V15.500H16" fill="none" /></g>,
  <g><path d="M2.500 1.500H6.500V15H2.500Z" {...B} /><path d="M2.500 10H6.500V15H2.500Z" {...W} /><path d="M10.500 1.500H14V15H10.500Z" {...G} /><path d="M10.500 9H14V15H10.500Z" {...W} /><path d="M.5 0V15.500H16" fill="none" /></g>,
  <g fill="none"><path d="M1 9 5 5 9 8 15 3" stroke={C.stroke} strokeWidth="1.400" /><path d="M1 12 6 7 9 10 13 4 16 5" /><path d="M.5 0V15.500H16" /></g>,
  <g><path d="M6 15 12 1 15.500 10V15Z" {...G} /><path d="M.5 9 6 1 12 10V15H.5Z" {...W} /><path d="M1 15 6.500 8 9 11 12 8 15.500 15Z" {...B} /><path d="M.5 15.500H16" /></g>,
  <g><path d="M1 3 5 7 9 2.500 12 6 15.500 3V9L12 13 9 9.500 5 14 1 9Z" {...B} /><path d="M.5 0V15.500H16" fill="none" /></g>,
  <g><path d="M2.500 2.500H6V15H2.500Z" {...B} /><path d="M6 8H10V15H6Z" {...W} /><path d="M10.500 2.500H14V15H10.500Z" {...G} /><path d="M1 12 6 8 10 11 15 5M.5 0V15.500H16" fill="none" /></g>,
  <g><path d="M2 9.500H5.500V15H2Z" {...B} /><path d="M6 1.500H10V15H6Z" {...W} /><path d="M10.500 5H14V15H10.500Z" {...G} /><path d="M1 12 6 9 10 11 15 6M.5 0V15.500H16" fill="none" /></g>,
  <g><path d="M1 9H4L8 6 12 9H15.500V12.500H11L8 10 5 12.500H1Z" fill="#f7a14b" stroke="#d86b06" /><path d="M1 6Q5 5 8 9 11 4 15.500 3V6Q11 13 8 13 5 13 1 10Z" {...B} /><path d="M1 3Q6 3 8 6 11 3 15.500 2" stroke="#8a8886" strokeWidth="2" fill="none" /><path d="M.5 0V15.500H16" fill="none" /></g>,
  <g><path d="M2.500 5H5.500V15H2.500Z" {...G} /><path d="M5.500 1.500H8.500V11H5.500Z" {...W} /><path d="M8.500 1.500H11.500V9H8.500Z" {...B} /><path d="M11.500 4.500H14.500V15H11.500Z" {...W} /><path d="M.5 0V15.500H16" fill="none" /></g>,
  <g {...B}><path d="M.5 1H15.500V5H.5ZM3 5H13V9H3ZM5 9H11V12.500H5ZM6.500 12.500H9.500V15H6.500Z" /></g>,
  <g stroke="none"><path d="M0 0H1V15H16V16H0Z" fill={K} /><circle cx="5" cy="5" r="1.700" fill={C.sky} /><circle cx="13" cy="3" r="1.700" fill={K} /><circle cx="9" cy="8" r="1.700" fill={C.sky} /><circle cx="4" cy="12" r="1.500" fill={K} /><circle cx="13" cy="12" r="1.700" fill={K} /></g>,
  <g><circle cx="8" cy="8" r="7.500" {...W} /><path d="M8 .5A7.500 7.500 0 0 1 13 13.500L8 8Z" {...B} /></g>,
  <g><circle cx="8" cy="8" r="5.500" fill="none" stroke={C.stroke} strokeWidth="5" /><circle cx="8" cy="8" r="5.500" fill="none" stroke={C.sky} strokeWidth="3" /><path d="M8 2.500A5.500 5.500 0 0 0 2.500 8" fill="none" stroke="#fff" strokeWidth="3" /></g>,
  <g><path d="M.5 1.500H15.500V14.500H.5Z" {...W} /><path d="M.5 1.500H8V14.500H.5Z" {...B} /><path d="M8 6.500H15.500M.5 9H8M12 6.500V14.500M8 10.500H12" /></g>,
  <g><circle cx="8" cy="6.500" r="5" fill="#fff" /><path d="M5 4 8 2 11 5 9 7 11 9 8 11 6 8Z" fill="#2f9e44" stroke="none" /><path d="M12 1A7 7 0 1 1 3 11M8 13.500V15.500M3 15.500H13" fill="none" /></g>,
  <g><path d="M.5 2 6 3.500 10 1.500 15.500 2.500 14.500 8 15.500 11 8 15 3 12Z" {...G} /><path d="M.5 2 7 3 6 9 2 10ZM9 8 15.500 5V11L9 14Z" {...B} /></g>,
  <g><path d="M.5 12A7.500 7.500 0 0 1 15.500 12H11.500A3.500 3.500 0 0 0 4.500 12Z" {...G} /><path d="M5 5.200A7.500 7.500 0 0 1 15.500 12H11.500A3.500 3.500 0 0 0 8 8.500Z" {...B} /><path d="M4 5 8 12" strokeWidth="1.500" /></g>,
  <g><path d="M.5 1.500H15.500V13.500H.5Z" fill="#fff" stroke="#8a8886" /><path d="M.5 14.500H15.500" /><text x="8" y="11" fontSize="7.500" textAnchor="middle" fill="#1b84cf" stroke="none" fontFamily={UI}>123</text></g>,
  <g><path d="M.5 1.500H15.500V14.500H.5Z" {...W} /><path d="M3 3.500V12.500" /><path d="M5 5H13M5 8H11" stroke={C.stroke} strokeWidth="1.500" /><path d="M5 11H12" /></g>,
  <g><path d="M.5 2H15.500V13.500H.5Z" {...W} /><path d="M2 10 4.500 5 7 10Z" fill="#2f9e44" stroke="none" /><path d="M8.500 5H14L11.300 10Z" fill="#d13438" stroke="none" /></g>,
  <g><path d="M.5 1H15.500V14H.5Z" {...W} /><path d="M.5 1H15.500V3H.5Z" fill="#8a8886" /><path d="M3 6H6V8H3ZM3 10.500H6V12.500H3Z" {...G} /><path d="M8 8.500H16L13.500 11.500V15H11V11.500Z" {...W} /></g>,
  <g><path d="M.5 1H15.500V14.500H.5Z" {...W} /><path d="M.5 1H15.500V3.500H.5Z" {...G} /><path d="M.5 7.500H15.500M.5 11H15.500M5.500 3V14M10.500 3V14" /></g>,
  <g><path d="M.5 1H15.500V14.500H.5Z" {...W} /><path d="M.5 1H15.500V3.500H.5Z" {...G} /><path d="M10.500 3.500H15.500V14.500H5.500V11H10.500Z" {...B} /><path d="M.5 7.500H15.500M.5 11H15.500M5.500 3V14M10.500 3V14" /></g>,
  <text x="7.500" y="13.500" fontSize="15" fontWeight="700" textAnchor="middle" fill="#1b84cf" stroke="none" fontFamily={UI} textLength="9" lengthAdjust="spacingAndGlyphs">R</text>,
  <text x="8" y="12.500" fontSize="14" fontWeight="700" textAnchor="middle" fill="#1b84cf" stroke="none" fontFamily={UI} textLength="17">Py</text>,
  <g><path d="M.5 0V15.500H16M1 3.500H11M1 7.500H8M1 11.500H5" fill="none" /><circle cx="13.500" cy="3.500" r="2" {...B} /><circle cx="9" cy="7.500" r="1.500" {...W} /><circle cx="6" cy="11.500" r="1.300" {...W} /></g>,
  <g><path d="M6 8H9M9 2.500V13.500H11M9 2.500H11M9 8H11" fill="none" /><path d="M.5 6H6V10H.5ZM10.500 .5H15.500V4.500H10.500ZM10.500 6H15.500V10H10.500ZM10.500 11.500H15.500V15.500H10.500Z" {...B} /></g>,
  <path d="M.5 1.500H15.500V11.500H7L3.500 15V11.500H.5Z" fill="#fff" stroke={C.stroke} />,
  <g><path d="M4 1H11.500L14.500 4V15.500H2V8" {...W} /><path d="M11 1V4.500H14.500M5 12H12" /><path d="M6 9H12" stroke={C.stroke} /><circle cx="3" cy="5.500" r="2" {...B} /></g>,
  <g><path d="M4 1H15.500V15H1V8Z" {...B} /><path d="M8 4 13 3 10 9 12 14" stroke="#fff" strokeWidth="2" fill="none" /><path d="M0 0H6V5L3 9 0 5ZM11 10H16V16H11Z" fill="#d86b06" stroke="none" /><circle cx="3" cy="3" r="1" fill="#fff" stroke="none" /></g>,
  <g fill="none" strokeWidth="1.200"><path d="M8 -.5 16.500 8 8 16.500 -.5 8ZM4 4 12 12M12 4 4 12M5.500 2 8 4.500 10.500 2M5.500 14 8 11.500 10.500 14" /></g>,
  <g fill="#d86b06" stroke="none"><path d="M0 6H2V8H0ZM6.500 6H8.500V8H6.500ZM13 6H15V8H13Z" /></g>,
];

/* ---------- taskbar icons ---------- */
const TI = ({ children, s = 26 }) => <svg width={s} height={s} viewBox="0 0 26 26">{children}</svg>;
const apps = [
  [<TI><circle cx="13" cy="13" r="7" fill="none" stroke="#111" strokeWidth="2.300" /></TI>],
  [<TI><path d="M6 4.500V7.500H16V4.500M6 10.500H16V16.500H6ZM6 22V19.500H16V22M20.500 4V22" fill="none" stroke="#111" strokeWidth="1.400" /><path d="M19 9H22V13H19Z" fill="#111" /></TI>],
  [<TI><path d="M1 9 13 1 25 9V24H1Z" fill="#0c59a4" /><path d="M3 9H23V18H3Z" fill="#fff" /><path d="M1 9 13 17 25 9V24H1Z" fill="#1c96e8" /><path d="M1 24 12 15.500 25 24Z" fill="#38b6ff" /></TI>],
  [<TI><path d="M2 3H10L12 5H23V21H2Z" fill="#e8a912" /><path d="M2 7H24V21H2Z" fill="#ffd75e" /><path d="M5 23V14H21V23H16V18H10V23Z" fill="#3a96dd" /></TI>, 1],
  [<TI><circle cx="13" cy="13" r="11" fill="#fbc116" /><path d="M3.500 7.500A11 11 0 0 1 22.500 7.500H13A5 5 0 0 0 8 13Z" fill="#e33b2e" /><path d="M3.500 7.500A11 11 0 0 0 12 24L17.500 15.500A5 5 0 0 1 8.500 15.500Z" fill="#2da94f" /><circle cx="13" cy="13" r="5" fill="#fff" /><circle cx="13" cy="13" r="3.900" fill="#4285f4" /></TI>, 1],
  [<TI><circle cx="13" cy="13" r="11.500" fill="#1277c9" /><path d="M2 10A11.500 11.500 0 0 1 24.500 12C24.500 17 18 18 16 16 18 12 15 8 10 8 6 8 3 10 2 13Z" fill="#44cbb0" /><path d="M9 14C8 20 14 24 20 22A11.500 11.500 0 0 1 9 24C5 20 6 15 9 14Z" fill="#0b4f96" /><path d="M16 16C14 18 18 19 22 17L21 19C16 21 12 19 12.500 15Z" fill="#d6ecf5" /></TI>],
  [<TI><circle cx="13" cy="13" r="11.500" fill="#f7931e" /><path d="M13 1.500A11.500 11.500 0 0 0 3 18L13 13Z" fill="#7a3fc0" /><path d="M13 1.500A11.500 11.500 0 0 1 24.500 13L13 13Z" fill="#ffc43a" /><circle cx="13" cy="12.500" r="6.500" fill="#fff" /><circle cx="13" cy="11.500" r="2" fill="#55318f" /><path d="M12 12H14V16H12Z" fill="#55318f" /></TI>, 1],
  [<TI><path d="M8 2H24V23H8Z" fill="#1f9e60" /><path d="M16 2H24V9H16Z" fill="#34c481" /><path d="M8 16H24V23H8Z" fill="#125c38" /><path d="M1 7H14V19H1Z" fill="#107c41" /><path d="M4.500 9.500 10.500 16.500M10.500 9.500 4.500 16.500" stroke="#fff" strokeWidth="1.900" /></TI>, 1],
  [<TI><path d="M5 10Q13 -1 21 10 13 5 5 10ZM5 16Q13 27 21 16 13 21 5 16Z" fill="#f37726" /><circle cx="6" cy="4" r="1.200" fill="#777" /><circle cx="21" cy="3" r="1.500" fill="#777" /><circle cx="6" cy="22" r="1.500" fill="#777" /></TI>, 1],
  [<TI><path d="M9 2 21 3.500 16 21.500 2 18.500Z" fill="#8ac5cf" stroke="#4f7f8a" /><path d="M21 3.500 25 21 16 21.500Z" fill="#5a8791" /><path d="M9.500 6 18 7.200M8 10 17 11.200" stroke="#d8f0f3" /></TI>, 1],
  [<TI><path d="M15 2H22V24H15Z" fill="#e8ad0c" /><path d="M10 8H17V24H10Z" fill="#f4c92a" /><path d="M5 14H12V24H5Z" fill="#ffe06b" /></TI>, 1, 1],
];

const kpis = [["Ventures", "8", 95, 25, 47, 22], ["Departments", "45", 94, 24, 69, 47], ["Cost", "16.4...", 105, 29, 24, 101], ["Training", "186", 91, 29, 42, 66], ["Employees", "1347", 96, 7, 58, 90]];

function SlicerField({ name, nw, ...rest }) {
  return (
    <Slicer {...rest}>
      <SlicerHead><Fit w={nw}>{name}</Fit><Chev w={9} h={9} c="#5a5856" /></SlicerHead>
      <SlicerBox><Fit w={14}>All</Fit><Chev w={13} h={13} c="#fff" /></SlicerBox>
    </Slicer>
  );
}

function ReportPage() {
  return (
    <Report>
      <Side>
        <SideTitle><Fit w={119}>Human Resource</Fit><br /><Fit w={144}>Analytics Dashboard</Fit></SideTitle>
        <YearsName><Fit w={29}>Years</Fit></YearsName>
        <Years>{[2017, 2018, 2019].map(y => <Year key={y}>{y}</Year>)}</Years>
        <SlicerField name="Months" nw={38} $mt={18} $ml={39} $w={114} />
        <Hours><KpiName><Fit w={77}>Training Hours</Fit></KpiName><KpiValue><Fit w={131}>16.25K</Fit></KpiValue></Hours>
        <SlicerField name="Trainer Type" nw={65} $mt={21} $ml={36} $w={117} />
        <SlicerField name="Department" nw={62} $mt={21} $ml={36} $w={117} />
        <Praxis><Fit w={142}>Praxis  Business School</Fit></Praxis>
      </Side>
      <Body>
        <Kpis>
          {kpis.map(([n, v, w, g, nw, vw]) => (
            <Kpi key={n} $w={w} $gap={g}><KpiName><Fit w={nw}>{n}</Fit></KpiName><KpiValue><Fit w={vw}>{v}</Fit></KpiValue></Kpi>
          ))}
          <Clear><Fit w={65}>Clear Filters</Fit><ClearBox /></Clear>
        </Kpis>
        <Ticker><TickerRun>{"310      Sales 168      Finance 62      Agency 52      Technical"}</TickerRun></Ticker>
        <ChartRow $mt={4}>
          <Tile $w={205} $h={187} $gap={9} $bg="#e6e6e6" $line="#4a4a4a"><StatusChart /></Tile>
          <Tile $w={230} $h={187} $gap={7} $bg="#e6e6e6"><CostChart /></Tile>
          <Tile $w={233} $h={187} $bg="#e6e6e6" $line="#4a4a4a"><TypeChart /></Tile>
        </ChartRow>
        <ChartRow $mt={14}>
          <Tile $w={273} $h={162} $gap={10} $bg="#e6e6e6"><CompanyChart /></Tile>
          <Tile $w={401} $h={162} $bg="#fff" $line="#b39b35"><MonthChart /></Tile>
        </ChartRow>
      </Body>
    </Report>
  );
}

export default function App() {
  return (
    <Screen>
      <Global />
      <Window>
        <TitleBar>
          <QuickTools>
            <svg width="17" height="16" viewBox="0 0 17 16" fill="none" stroke="#c8c6c4"><path d="M1.500 .5H15.500V15.500H3.500L1.500 13.500ZM4 1V7.500H13V1M5 15V10.500H12V15M7 15V12.500H8V15" /></svg>
            <svg width="15" height="15" viewBox="0 0 15 15" fill="none" stroke="#7b7977" strokeWidth="1.200"><path d="M1.500 0V6.500H7.500M1.500 6.500Q4 1 9 1 14 2 13.500 6.500 13 9 6 14.500" /></svg>
            <svg width="15" height="15" viewBox="0 0 15 15" fill="none" stroke="#7b7977" strokeWidth="1.200"><path d="M13.500 0V6.500H7.500M13.500 6.500Q11 1 6 1 1 2 1.500 6.500 2 9 9 14.500" /></svg>
          </QuickTools>
          <WindowTitle><Fit w={305}>Human Resource Analytics Dashboard - Power BI Desktop</Fit></WindowTitle>
          <TopSearch><Mag s={16} /><Fit w={41}>Search</Fit></TopSearch>
          <SignIn><Fit w={36}>Sign in</Fit><Avatar /></SignIn>
          <WindowButtons>
            <svg width="10" height="10" stroke="#fff"><path d="M0 5.500H10" /></svg>
            <svg width="10" height="10" stroke="#fff" fill="none"><path d="M.5 2.500H7.500V9.500H.5ZM2.500 2.500V.5H9.500V7.500H7.500" /></svg>
            <svg width="10" height="10" stroke="#fff"><path d="M0 0 10 10M10 0 0 10" /></svg>
          </WindowButtons>
        </TitleBar>
        <Tabs>
          <Tab $w={20} $gap={38}><Fit w={20}>File</Fit></Tab>
          <Tab $w={38} $gap={31} $on><Fit w={38}>Home</Fit></Tab>
          <Tab $w={35} $gap={32}><Fit w={35}>Insert</Fit></Tab>
          <Tab $w={58} $gap={32}><Fit w={58}>Modeling</Fit></Tab>
          <Tab $w={30} $gap={31}><Fit w={29}>View</Fit></Tab>
          <Tab $w={30} $gap={0}><Fit w={28}>Help</Fit></Tab>
        </Tabs>
        <RibbonBar />
        <Main>
          <Rail>
            <RailItem $on><svg width="14" height="15" viewBox="0 0 14 15" fill="none" stroke={K} strokeWidth="1.100"><path d="M.5 0V14.500H14M2.500 12.500V3.500H4.500V12.500ZM6.500 12.500V6.500H8.500V12.500ZM10.500 12.500V1.500H12.500V12.500Z" /></svg></RailItem>
            <RailItem><svg width="16" height="15" viewBox="0 0 16 15" fill="none" stroke="#605e5c"><path d="M.5 .5H15.500V14.500H.5ZM.5 3H15.500M.5 7H15.500M.5 10.500H15.500M5.500 3V14M10.500 3V14" /></svg></RailItem>
            <RailItem><svg width="18" height="18" viewBox="0 0 18 18" fill="none" stroke="#605e5c"><path d="M.5 5.500H7.500V12.500H.5ZM.5 8H7.500M10.500 .5H17.500V7.500H10.500ZM10.500 3H17.500M10.500 10.500H17.500V17.500H10.500ZM10.500 13H17.500M4.500 5V2.500H10.500M4.500 13V15.500H10.500" /></svg></RailItem>
          </Rail>
          <Center>
            <CanvasRow>
              <ReportPage />
              <FilterPane>
                <Chev d="left" w={9} h={12} />
                <FilterMark width="13" height="14" viewBox="0 0 13 14" fill="none" stroke="#484644"><path d="M11.500 1V13L6.500 8.500H1V5.500H6.500Z" /></FilterMark>
                <FilterName>Filters</FilterName>
              </FilterPane>
            </CanvasRow>
            <PageTabs>
              <PageNav><svg width="6" height="10"><path d="M5 1V9L0 5Z" fill="#bdbbb9" /></svg><svg width="6" height="10"><path d="M0 1V9L5 5Z" fill="#bdbbb9" /></svg></PageNav>
              <PageTab><Fit w={59}>Dashboard</Fit></PageTab>
              <AddPage><svg width="11" height="11"><path d="M5.500 0V11M0 5.500H11" stroke="#6b6a5a" strokeWidth="2.500" /></svg></AddPage>
            </PageTabs>
          </Center>
          <VizPane>
            <PaneHead><Fit w={99}>Visualizations</Fit><Chev d="right" w={11} h={12} /></PaneHead>
            <IconGrid>{gallery.map((g, i) => <svg key={i} width="16" height="16" viewBox="0 0 16 16" stroke={K} strokeWidth="1" overflow="visible">{g}</svg>)}</IconGrid>
            <Custom><svg width="20" height="17"><rect width="20" height="17" fill="#3b3a39" /><text x="0" y="12" fontSize="9" fill="#fff" fontFamily={UI} textLength="12" lengthAdjust="spacingAndGlyphs">ABC</text><path d="M12.500 11 14.500 7 16.500 11Z" fill="#3be01a" /><text x="17" y="12" fontSize="9" fill="#fff" fontFamily={UI} textLength="3" lengthAdjust="spacingAndGlyphs">C</text></svg></Custom>
            <FormatTabs>
              <FormatTab $on><svg width="20" height="21" viewBox="0 0 20 21" fill="none" stroke={C.ink}><path d="M0 .5H16" /><path d="M.5 3.500H19.500V10.500H.5ZM.5 12.500H19.500V19.500H.5Z" strokeDasharray="2 1" /></svg></FormatTab>
              <FormatTab><svg width="18" height="21" viewBox="0 0 18 21" fill="none" stroke={C.ink} strokeWidth="1.100"><path d="M.5 .5H14.500V4.500H.5ZM14.500 2.500H17.500V7.500H8.500V10.500M6.500 10.500H10.500V19.500H6.500Z" /></svg></FormatTab>
            </FormatTabs>
            <WellName $pl={12} $mt={3}><Fit w={34}>Values</Fit></WellName>
            <Well $mt={6} $h={28} $pl={10}><Fit w={107}>Add data fields here</Fit></Well>
            <Drill><Fit w={93}>Drill through</Fit></Drill>
            <WellName $pl={9} $mt={14}><Fit w={67}>Cross-report</Fit></WellName>
            <Toggle $mt={12}><Fit w={17}>Off</Fit><svg width="30" height="13" stroke="#605e5c" fill="none" strokeWidth="2"><circle cx="5.500" cy="6.500" r="5" strokeWidth="1.700" /><path d="M11 6.500H29" /></svg></Toggle>
            <WellName $pl={9} $mt={20}><Fit w={74}>Keep all filters</Fit></WellName>
            <Toggle $mt={12}><Fit w={16}>On</Fit><svg width="30" height="13" stroke="#605e5c" strokeWidth="2"><path d="M0 6.500H20" /><circle cx="23.500" cy="6.500" r="6" fill="#605e5c" stroke="none" /></svg></Toggle>
            <Well $mt={14} $h={26} $pl={8}><Fit w={151}>Add drill-through fields here</Fit></Well>
          </VizPane>
          <FieldsPane>
            <PaneHead><Fit w={41}>Fields</Fit><Chev d="right" w={11} h={12} /></PaneHead>
            <FieldSearch><Mag s={15} /><Fit w={41}>Search</Fit></FieldSearch>
            <FieldTree>
              <FieldItem><Chev d="right" w={7} h={11} c="#605e5c" /><svg width="14" height="12" viewBox="0 0 14 12" fill="none" stroke={K}><path d="M.5 .5H13.500V11.500H.5ZM.5 4H13.500M.5 8H13.500M5 1V11M9.500 1V11" /><path d="M.5 1.500H13.500" strokeWidth="2" /></svg><Fit w={98}>Corporate Training</Fit></FieldItem>
            </FieldTree>
          </FieldsPane>
        </Main>
        <Status><Fit w={58}>Page 1 of 1</Fit><Fit w={192}>Update available (click to download)</Fit></Status>
      </Window>
      <Taskbar>
        <StartCell><svg width="16" height="16" viewBox="0 0 16 16" fill="#111"><path d="M0 2.300 7 1.300V7.500H0ZM8 1.200 16 0V7.500H8ZM0 8.500H7V14.700L0 13.700ZM8 8.500H16V16L8 14.800Z" /></svg></StartCell>
        <TaskSearch><Mag s={16} c="#111" /><Fit w={128}>Type here to search</Fit></TaskSearch>
        {apps.map(([icon, open, active], i) => <TaskCell key={i} $open={open} $active={active}>{icon}</TaskCell>)}
        <Tray>
          <TrayItem $w={24}><svg width="22" height="20" viewBox="0 0 22 20"><circle cx="11" cy="8.500" r="8" fill="#f9b42d" /><path d="M6 18.500A4 4 0 0 1 6 11 5 5 0 0 1 15 12 3.300 3.300 0 0 1 17 18.500Z" fill="#efe3cf" stroke="#d3b98a" strokeWidth=".6" /></svg></TrayItem>
          <TrayItem $w={46} $fs={13}><Fit w={28}>29°C</Fit></TrayItem>
          <TrayItem $w={24} $ml={8}><Chev d="up" w={12} h={12} t={1.4} c="#111" /></TrayItem>
          <TrayItem $w={38}><svg width="16" height="10" viewBox="0 0 16 10" fill="none" stroke="#111" strokeWidth="1.300"><path d="M1.500 1H13.500V9H1.500ZM15 3.500V6.500" /><path d="M4 3H8V7H4Z" fill="#111" /></svg></TrayItem>
          <TrayItem $w={30}><svg width="14" height="14" viewBox="0 0 14 14" fill="none" stroke="#222"><path d="M1 13A12 12 0 0 1 13 1M4 13A9 9 0 0 1 13 4.500M7 13A6 6 0 0 1 13 8" /><circle cx="11.500" cy="12" r="1.500" fill="#222" stroke="none" /></svg></TrayItem>
          <TrayItem $w={32}><svg width="18" height="14" viewBox="0 0 18 14" fill="none" stroke="#111"><path d="M.5 4.500H3.500L7.500 1V13L3.500 9.500H.5ZM10 4.500Q11.500 7 10 9.500M12.500 2.500Q15 7 12.500 11.500M15 .5Q18.500 7 15 13.500" /></svg></TrayItem>
          <TrayItem $w={34} $fs={11.5}><Fit w={23}>ENG</Fit></TrayItem>
          <Clock><Fit w={43}>6:04 PM</Fit><br /><Fit w={53}>7/11/2021</Fit></Clock>
          <TrayItem $w={42}><svg width="26" height="26" viewBox="0 0 26 26"><path d="M2 3H18V16H8L5 19V16H2Z" fill="#111" /><path d="M5 6.500H15M5 9.500H15M5 12.500H12" stroke="#d6d6d6" /><circle cx="17" cy="17" r="7.500" fill="#d6d6d6" stroke="#666" /><text x="17" y="21" fontSize="10.500" textAnchor="middle" fill="#111" fontFamily={UI}>1</text></svg></TrayItem>
        </Tray>
      </Taskbar>
    </Screen>
  );
}
